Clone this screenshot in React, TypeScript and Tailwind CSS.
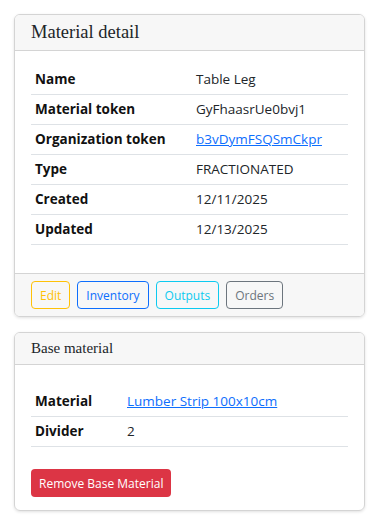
import React from "react";

const sans = { fontFamily: '"Open Sans", "Noto Sans", sans-serif' };
const serif = { fontFamily: '"Liberation Serif", serif' };

const Row = ({ label, children }: { label: string; children: React.ReactNode }) => (
  <tr className="border-b border-[#dee2e6]">
    <th className="py-1 px-1 text-left font-bold align-top text-[#111]">{label}</th>
    <td className="py-1 px-1 align-top">{children}</td>
  </tr>
);

export default function App() {
  return (
    <div className="bg-white min-h-screen pl-[14px] pr-[10px] pt-[14px] text-[13.5px] leading-[21px] text-[#212529]" style={sans}>
      {/* Material detail */}
      <div className="rounded-md border border-[#d4d4d4] shadow-[0_1px_3px_rgba(0,0,0,0.12)] overflow-hidden">
        <div className="bg-[#f7f7f7] border-b border-[#d4d4d4] px-4 h-[36px] flex items-center">
          <h2 className="text-[18.5px] text-[#212529]" style={serif}>
            Material detail
          </h2>
        </div>
        <div className="px-4 pt-[14px] pb-[28px]">
          <table className="w-full border-collapse">
            <colgroup>
              <col className="w-[161px]" />
              <col />
            </colgroup>
            <tbody>
              <Row label="Name">Table Leg</Row>
              <Row label="Material token">GyFhaasrUe0bvj1</Row>
              <Row label="Organization token">
                <a href="#" className="text-[#0d6efd] underline">b3vDymFSQSmCkpr</a>
              </Row>
              <Row label="Type">FRACTIONATED</Row>
              <Row label="Created">12/11/2025</Row>
              <Row label="Updated">12/13/2025</Row>
            </tbody>
          </table>
        </div>
        <div className="bg-[#f7f7f7] border-t border-[#d4d4d4] px-4 py-[7px] flex gap-[7px] text-[12px]">
          <button className="h-[28px] px-2 rounded border border-[#ffc107] text-[#ffc107]">Edit</button>
          <button className="h-[28px] px-2 rounded border border-[#0d6efd] text-[#0d6efd]">Inventory</button>
          <button className="h-[28px] px-2 rounded border border-[#0dcaf0] text-[#0dcaf0]">Outputs</button>
          <button className="h-[28px] px-2 rounded border border-[#6c757d] text-[#6c757d]">Orders</button>
        </div>
      </div>

      {/* Base material */}
      <div className="mt-[15px] rounded-md border border-[#d4d4d4] shadow-[0_1px_3px_rgba(0,0,0,0.12)] overflow-hidden">
        <div className="bg-[#f7f7f7] border-b border-[#d4d4d4] px-4 h-[32px] flex items-center">
          <h3 className="text-[15px] text-[#212529]" style={serif}>
            Base material
          </h3>
        </div>
        <div className="px-4 pt-[22px] pb-[13px]">
          <table className="w-full border-collapse">
            <colgroup>
              <col className="w-[92px]" />
              <col />
            </colgroup>
            <tbody>
              <Row label="Material">
                <a href="#" className="text-[#0d6efd] underline">Lumber Strip 100x10cm</a>
              </Row>
              <Row label="Divider">2</Row>
            </tbody>
          </table>
          <button className="mt-[22px] h-[28px] px-2 rounded bg-[#dc3545] text-white text-[12px]">
            Remove Base Material
          </button>
        </div>
      </div>
    </div>
  );
}
